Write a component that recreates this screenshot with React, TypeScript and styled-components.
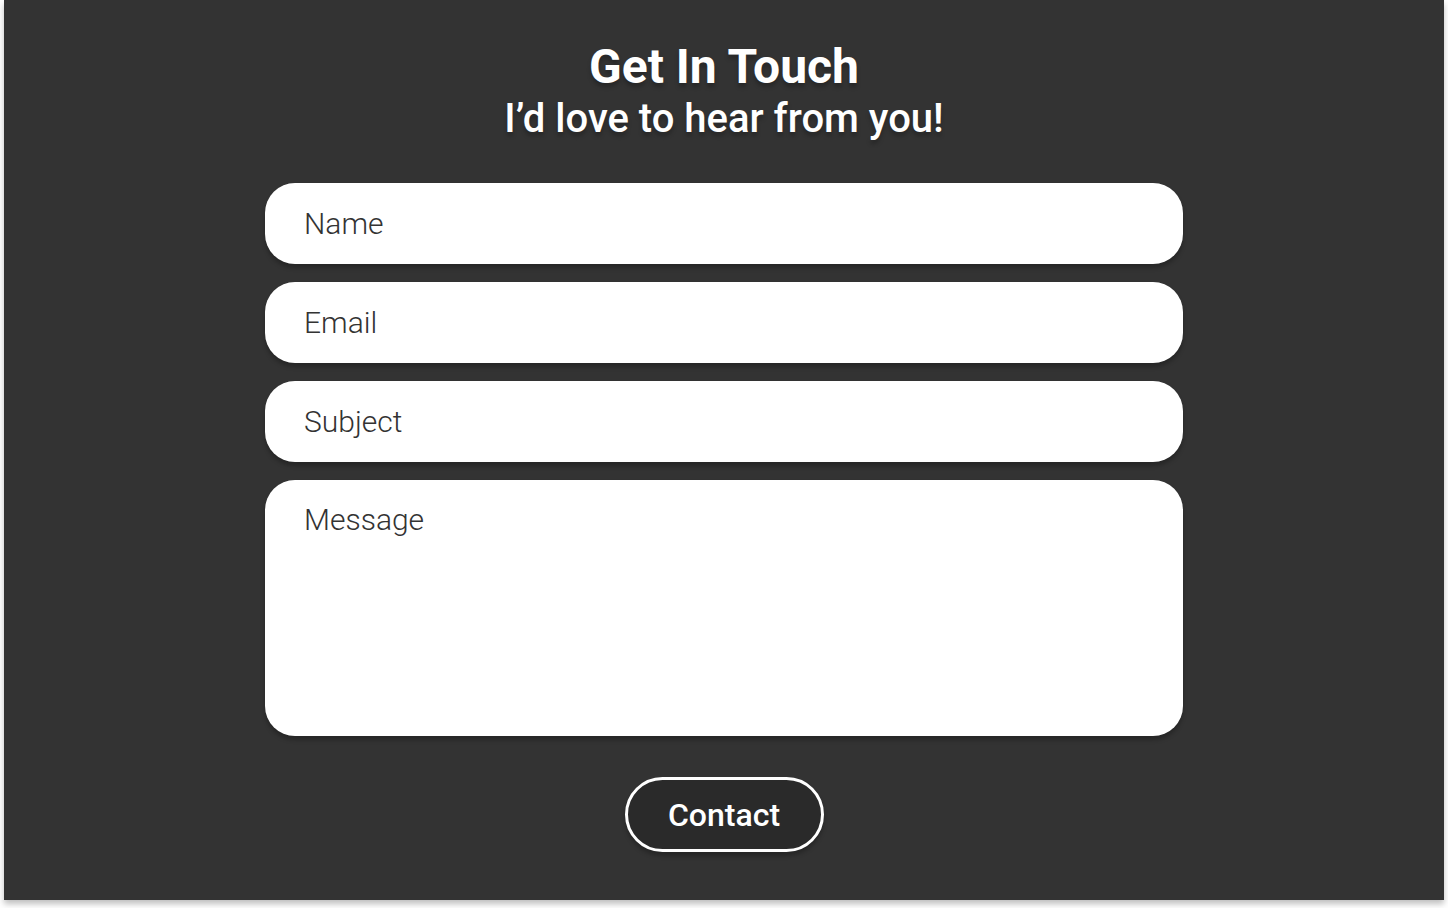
import React from "react";
import styled, { createGlobalStyle } from "styled-components";

const Global = createGlobalStyle`
  html, body { margin: 0; padding: 0; background: #ffffff; }
  body { font-family: Roboto, "Noto Sans", sans-serif; }
  * { box-sizing: border-box; }
`;

const Page = styled.div`
  display: flex;
  justify-content: center;
  padding-bottom: 8px;
`;

const Panel = styled.section`
  width: 1440px;
  height: 900px;
  background: #333333;
  box-shadow: 0 4px 6px rgba(0, 0, 0, 0.25);
  display: flex;
  flex-direction: column;
  align-items: center;
  padding-top: 40px;
`;

const Title = styled.h1`
  margin: 0;
  font-family: Roboto, sans-serif;
  font-weight: 700;
  font-size: 48px;
  line-height: 54px;
  color: #ffffff;
  text-shadow: 0 4px 4px rgba(0, 0, 0, 0.25);
`;

const Subtitle = styled.h2`
  margin: 0;
  font-family: Roboto, sans-serif;
  font-weight: 500;
  font-size: 40px;
  line-height: 50px;
  color: #ffffff;
  text-shadow: 0 4px 4px rgba(0, 0, 0, 0.25);
`;

const Form = styled.form`
  width: 918px;
  margin-top: 39px;
  display: flex;
  flex-direction: column;
  gap: 18px;
  align-items: center;
`;

const Field = styled.input`
  width: 100%;
  height: 81px;
  border: none;
  border-radius: 30px;
  background: #ffffff;
  padding: 0 39px;
  font-family: Roboto, sans-serif;
  font-weight: 300;
  font-size: 30px;
  color: #333;
  box-shadow: 0 4px 4px rgba(0, 0, 0, 0.25);
  outline: none;
  &::placeholder { color: #333333; opacity: 1; }
`;

const Area = styled.textarea`
  width: 100%;
  height: 256px;
  border: none;
  border-radius: 30px;
  background: #ffffff;
  padding: 22px 39px;
  font-family: Roboto, sans-serif;
  font-weight: 300;
  font-size: 30px;
  line-height: 36px;
  color: #333;
  resize: none;
  box-shadow: 0 4px 4px rgba(0, 0, 0, 0.25);
  outline: none;
  &::placeholder { color: #333333; opacity: 1; }
`;

const Button = styled.button`
  margin-top: 23px;
  width: 199px;
  height: 75px;
  border: 3px solid #ffffff;
  border-radius: 40px;
  background: #2a2a2a;
  color: #ffffff;
  font-family: Roboto, sans-serif;
  font-weight: 500;
  font-size: 32px;
  box-shadow: 0 4px 4px rgba(0, 0, 0, 0.25);
  cursor: pointer;
`;

export default function App() {
  return (
    <Page>
      <Global />
      <Panel>
        <Title>Get In Touch</Title>
        <Subtitle>I’d love to hear from you!</Subtitle>
        <Form onSubmit={(e) => e.preventDefault()}>
          <Field placeholder="Name" />
          <Field placeholder="Email" />
          <Field placeholder="Subject" />
          <Area placeholder="Message" />
          <Button type="submit">Contact</Button>
        </Form>
      </Panel>
    </Page>
  );
}
